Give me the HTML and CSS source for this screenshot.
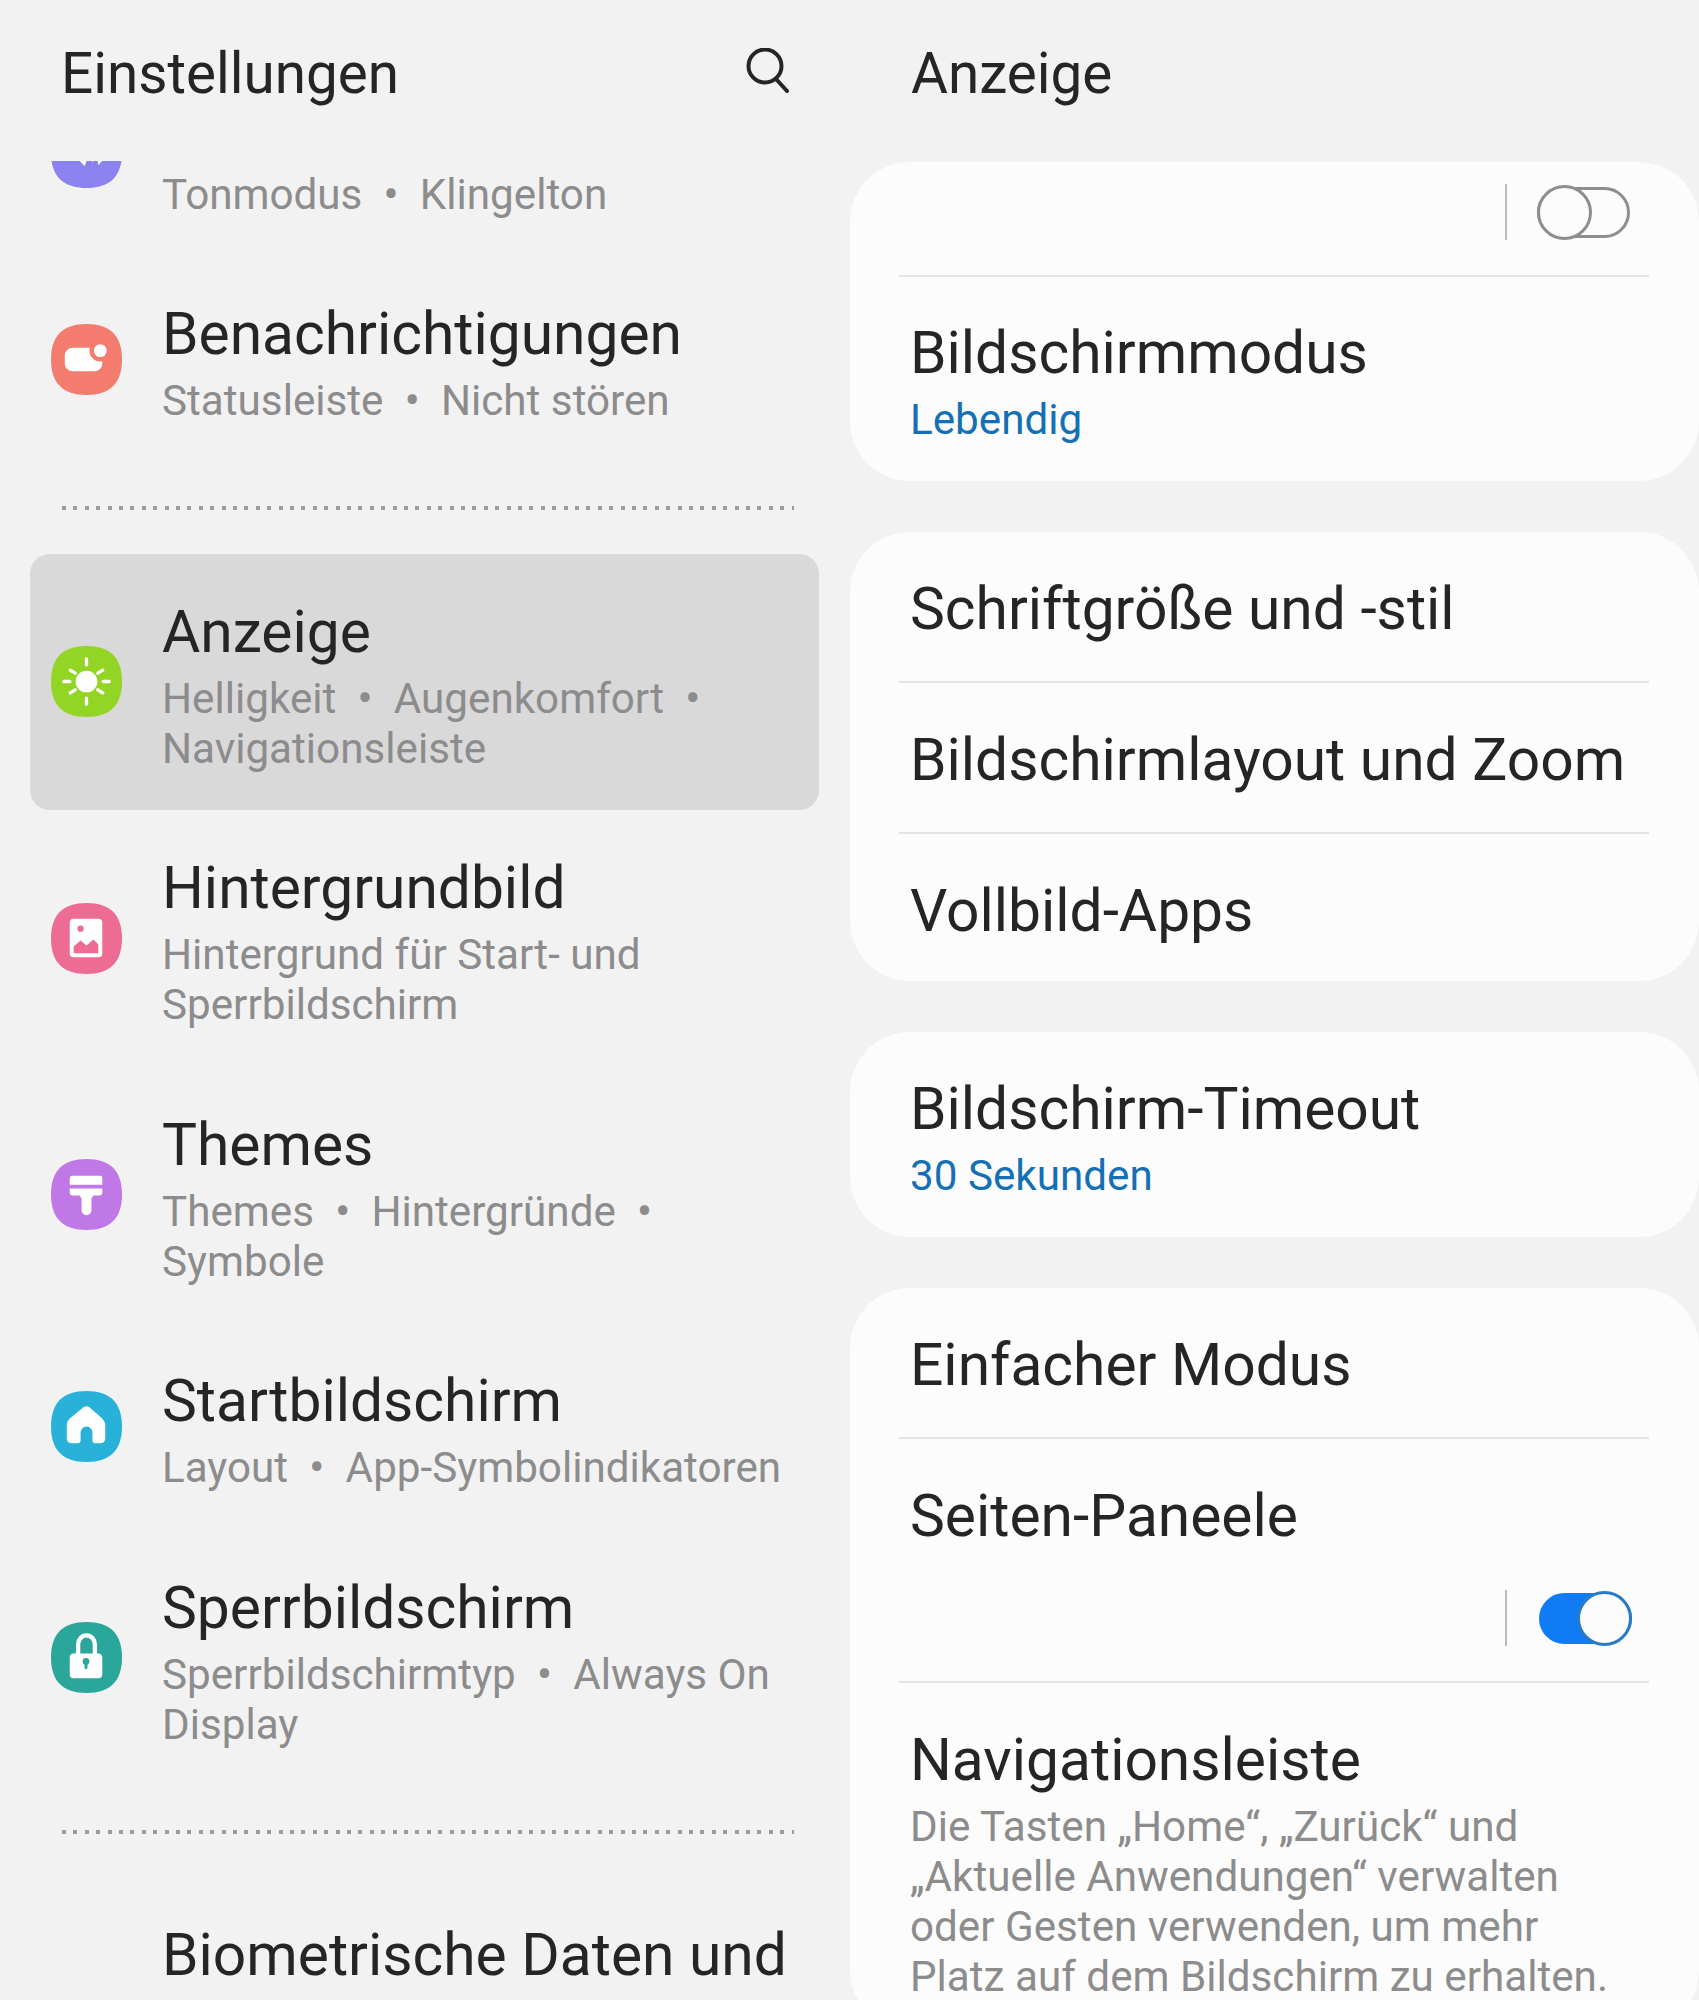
FILE: index.html
```html
<!DOCTYPE html>
<html lang="de">
<head>
  <title>Einstellungen</title>
  <meta charset="utf-8">
  <link rel="stylesheet" href="styles.css">
</head>
<body>
  <svg class="defs" width="0" height="0">
    <defs>
      <path id="squircle" d="M36 0C60 0 72 12 72 36C72 60 60 72 36 72C12 72 0 60 0 36C0 12 12 0 36 0Z"/>
    </defs>
  </svg>

  <!-- Left: settings list -->
  <div class="pane">
    <div class="header">
      <h1>Einstellungen</h1>
      <svg class="search" viewBox="0 0 44 45" fill="none" stroke="#252525" stroke-width="4" stroke-linecap="round">
        <circle cx="19" cy="18" r="16.5"/>
        <path d="M30 31L41 43"/>
      </svg>
    </div>

    <div class="list">
      <div class="row row-scrolled">
        <svg class="icon" viewBox="0 0 72 72">
          <use href="#squircle" fill="#8b82ef"/>
          <path d="M36 10C27 10 22 17 21 26L27 42L34 50L37 42H41.500L42 47L43 42H47L48 49L54 42C51 36 51 30 50 24C49 16 44 10 36 10Z" fill="#fff"/>
        </svg>
        <div class="text">
          <div class="title">&nbsp;</div>
          <div class="sub">Tonmodus <span class="dot">•</span> Klingelton</div>
        </div>
      </div>

      <div class="row">
        <svg class="icon" viewBox="0 0 72 72">
          <use href="#squircle" fill="#f47c6e"/>
          <rect x="14" y="24" width="38" height="24" rx="8" fill="#fff"/>
          <circle cx="50" cy="27" r="11" fill="#f47c6e"/>
          <circle cx="50" cy="27" r="6.5" fill="#fff"/>
        </svg>
        <div class="text">
          <div class="title">Benachrichtigungen</div>
          <div class="sub">Statusleiste <span class="dot">•</span> Nicht stören</div>
        </div>
      </div>

      <div class="dots"></div>

      <div class="row row-active">
        <svg class="icon" viewBox="0 0 72 72">
          <use href="#squircle" fill="#93d524"/>
          <circle cx="36" cy="36" r="11" fill="#fff"/>
          <path d="M36 13V19M36 53V59M13 36H19M53 36H59M19.5 24.5L24.5 27.5M47.5 44.5L52.5 47.5M19.5 47.5L24.5 44.5M47.5 27.5L52.5 24.5" stroke="#fff" stroke-width="3.4" stroke-linecap="round"/>
        </svg>
        <div class="text">
          <div class="title">Anzeige</div>
          <div class="sub">Helligkeit <span class="dot">•</span> Augenkomfort <span class="dot">•</span> Navigationsleiste</div>
        </div>
      </div>

      <div class="row">
        <svg class="icon" viewBox="0 0 72 72">
          <use href="#squircle" fill="#ec6c94"/>
          <rect x="19" y="16" width="33" height="39" rx="4" fill="#fff"/>
          <circle cx="30" cy="26" r="3.2" fill="#ec6c94"/>
          <path d="M23 51V44L30 38L36 43L43 37L48 42V51Z" fill="#ec6c94"/>
        </svg>
        <div class="text">
          <div class="title">Hintergrundbild</div>
          <div class="sub">Hintergrund für Start- und Sperrbildschirm</div>
        </div>
      </div>

      <div class="row">
        <svg class="icon" viewBox="0 0 72 72">
          <use href="#squircle" fill="#bf78e6"/>
          <path d="M22 17H50A2 2 0 0 1 52 19V26H19V20A3 3 0 0 1 22 17Z" fill="#fff"/>
          <path d="M19 30H52V34A3 3 0 0 1 49 37H43L41 40V52A5 5 0 0 1 31 52V40L29 37H22A3 3 0 0 1 19 34Z" fill="#fff"/>
        </svg>
        <div class="text">
          <div class="title">Themes</div>
          <div class="sub">Themes <span class="dot">•</span> Hintergründe <span class="dot">•</span> Symbole</div>
        </div>
      </div>

      <div class="row">
        <svg class="icon" viewBox="0 0 72 72">
          <use href="#squircle" fill="#29b2d9"/>
          <path d="M33 16.500Q36 14.500 39 16.500L52 28Q55 31 55 35V48Q55 53 50 53H45A3 3 0 0 1 42 50V42A6 6 0 0 0 30 42V50A3 3 0 0 1 27 53H21Q16 53 16 48V35Q16 31 19 28Z" fill="#fff"/>
        </svg>
        <div class="text">
          <div class="title">Startbildschirm</div>
          <div class="sub">Layout <span class="dot">•</span> App-Symbolindikatoren</div>
        </div>
      </div>

      <div class="row">
        <svg class="icon" viewBox="0 0 72 72">
          <use href="#squircle" fill="#2aa79a"/>
          <path d="M27.500 33V23A8.500 9.500 0 0 1 44.500 23V33" fill="none" stroke="#fff" stroke-width="4.400"/>
          <rect x="19" y="32" width="33" height="25" rx="4" fill="#fff"/>
          <circle cx="35.500" cy="40" r="3.400" fill="#2aa79a"/>
          <rect x="34" y="40" width="3" height="8" rx="1.500" fill="#2aa79a"/>
        </svg>
        <div class="text">
          <div class="title">Sperrbildschirm</div>
          <div class="sub">Sperrbildschirmtyp <span class="dot">•</span> Always On Display</div>
        </div>
      </div>

      <div class="dots"></div>

      <div class="row">
        <div class="icon"></div>
        <div class="text">
          <div class="title">Biometrische Daten und</div>
        </div>
      </div>
    </div>
  </div>

  <!-- Right: display settings -->
  <div class="pane">
    <div class="header header-right">
      <h1>Anzeige</h1>
    </div>

    <div class="card">
      <div class="item item-switch">
        <div class="switch-wrap">
          <span class="sep"></span>
          <span class="switch"><span class="knob"></span></span>
        </div>
      </div>
      <div class="item item-value">
        <div class="title">Bildschirmmodus</div>
        <div class="value">Lebendig</div>
      </div>
    </div>

    <div class="card">
      <div class="item"><div class="title">Schriftgröße und -stil</div></div>
      <div class="item"><div class="title">Bildschirmlayout und Zoom</div></div>
      <div class="item"><div class="title">Vollbild-Apps</div></div>
    </div>

    <div class="card">
      <div class="item item-value">
        <div class="title">Bildschirm-Timeout</div>
        <div class="value">30 Sekunden</div>
      </div>
    </div>

    <div class="card">
      <div class="item"><div class="title">Einfacher Modus</div></div>
      <div class="item">
        <div class="title">Seiten-Paneele</div>
        <div class="switch-wrap switch-below">
          <span class="sep"></span>
          <span class="switch on"><span class="knob"></span></span>
        </div>
      </div>
      <div class="item">
        <div class="title">Navigationsleiste</div>
        <div class="sub">Die Tasten „Home“, „Zurück“ und „Aktuelle Anwendungen“ verwalten oder Gesten verwenden, um mehr Platz auf dem Bildschirm zu erhalten.</div>
      </div>
    </div>
  </div>
</body>
</html>
```

FILE: styles.css
```css
html, body {
  margin: 0;
  height: 2000px;
  overflow: hidden;
}

body {
  display: grid;
  grid-template-columns: 850px 849px;
  background-color: #f2f2f2;
  color: #252525;
  font-family: Roboto, "Noto Sans", sans-serif;
}

.defs {
  position: absolute;
}

.pane {
  height: 2000px;
  overflow: hidden;
}

.header {
  height: 161px;
  box-sizing: border-box;
  padding: 0 60px 0 61px;
  display: flex;
  justify-content: space-between;
  align-items: flex-start;
}

.header-right {
  height: 162px;
  padding-left: 61px;
}

h1 {
  margin: 41px 0 0;
  font-size: 56.6px;
  line-height: 66px;
  font-weight: 400;
}

.search {
  width: 44px;
  height: 45px;
  margin-top: 48px;
}

.list {
  height: 1839px;
  overflow: hidden;
  padding: 0 31px 0 30px;
}

.row {
  display: flex;
  align-items: center;
  padding: 36px 20px 36.5px 21px;
  border-radius: 20px;
}

.row-scrolled {
  margin-top: -111.5px;
}

.row-active {
  background-color: #d9d9d9;
}

.icon {
  flex: none;
  width: 71px;
  height: 71px;
  margin-right: 40px;
}

.title {
  font-size: 58.7px;
  line-height: 84px;
}

.sub {
  font-size: 42.2px;
  line-height: 50px;
  color: #8c8c8c;
}

.dot {
  margin: 0 10.5px;
  font-size: 46px;
  line-height: 0;
  vertical-align: -1px;
}

.dots {
  height: 4px;
  margin: 43.5px 25px 43.5px 32px;
  background-image: repeating-linear-gradient(90deg, #9c9c9c 0, #9c9c9c 4px, transparent 4px, transparent 11.4px);
}

.card {
  background-color: #fcfcfc;
  border-radius: 60px;
  margin-bottom: 51px;
  padding: 0 50px 0 49px;
}

.item {
  padding: 35px 11px 30px;
  border-bottom: 2px solid #e3e3e3;
}

.item:last-child {
  padding-bottom: 28px;
  border-bottom: none;
}

.item.item-value {
  padding-bottom: 36px;
}

.value {
  font-size: 42.2px;
  line-height: 50px;
  color: #1470b5;
}

.item.item-switch {
  padding-top: 22px;
  padding-bottom: 35px;
}

.item-switch + .item {
  padding-top: 34px;
}

.switch-wrap {
  display: flex;
  align-items: center;
  justify-content: flex-end;
  margin-right: 8px;
}

.switch-below {
  margin-top: 32px;
  margin-bottom: 5px;
}

.sep {
  width: 2px;
  height: 56px;
  margin-right: 30px;
  background-color: #bbbbbb;
}

.switch {
  position: relative;
  display: block;
  box-sizing: border-box;
  width: 93px;
  height: 51px;
  border: 3px solid #8e8e8e;
  border-radius: 26px;
}

.knob {
  position: absolute;
  left: -3px;
  top: -5px;
  box-sizing: border-box;
  width: 55px;
  height: 55px;
  border: 3px solid #8e8e8e;
  border-radius: 50%;
  background-color: #fcfcfc;
}

.switch.on {
  margin: 0 -2px 0 2px;
  background-color: #0f7cf5;
  border-color: #0f7cf5;
}

.switch.on .knob {
  left: auto;
  right: -3px;
  border-color: #2a7bc4;
}
```
